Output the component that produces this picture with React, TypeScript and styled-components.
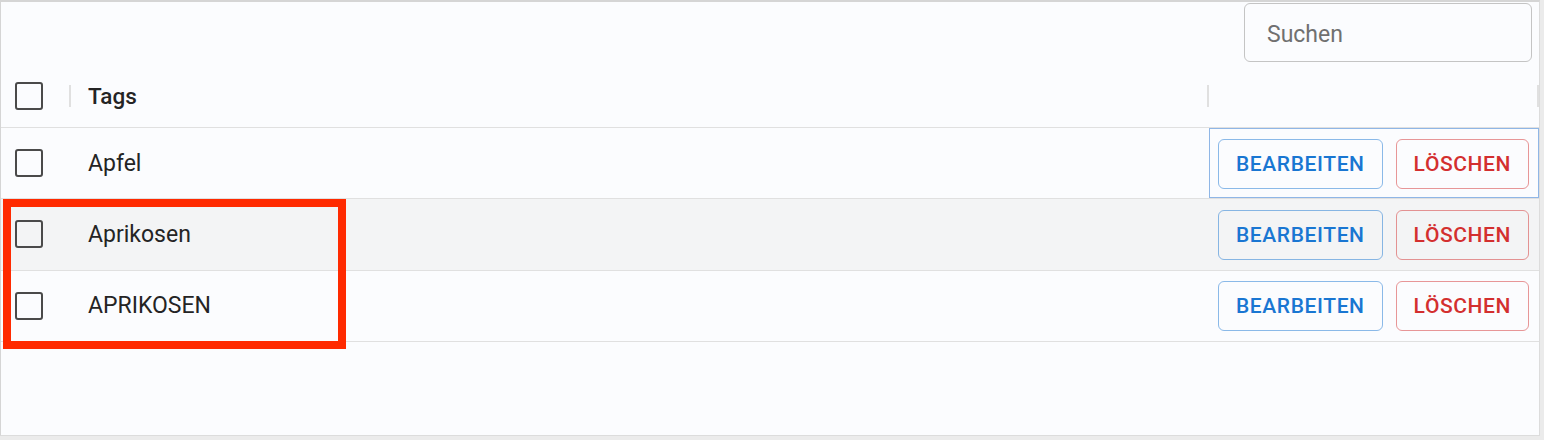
import React from 'react'
import styled, { createGlobalStyle } from 'styled-components'

const GlobalStyle = createGlobalStyle`
  html, body {
    margin: 0;
    padding: 0;
    background: #ebebeb;
  }
  body {
    font-family: Roboto, "Liberation Sans", Arial, sans-serif;
  }
`

const Frame = styled.div`
  position: relative;
  box-sizing: border-box;
  width: 1540px;
  height: 436px;
  background: #fbfcfe;
  border-top: 2px solid #d5d5d5;
  border-left: 1px solid #d5d5d5;
  border-right: 1px solid #dcdcdc;
  border-bottom: 1px solid #dcdcdc;
  display: flex;
  flex-direction: column;
`

const Toolbar = styled.div`
  height: 63px;
  box-sizing: border-box;
  display: flex;
  justify-content: flex-end;
  align-items: flex-start;
  padding: 1px 7px 0 0;
`

const Search = styled.input`
  box-sizing: border-box;
  width: 288px;
  height: 59px;
  border: 1px solid #c4c4c4;
  border-radius: 6px;
  background: transparent;
  padding: 3px 22px 0;
  font-family: Roboto, "Liberation Sans", Arial, sans-serif;
  font-size: 23px;
  color: #222;
  outline: none;

  &::placeholder {
    color: #707070;
  }
`

const Row = styled.div<{ $header?: boolean; $hover?: boolean }>`
  display: grid;
  grid-template-columns: 70px 1fr 330px;
  height: ${p => (p.$header ? '62px' : '70.33px')};
  border-bottom: 1px solid #e0e0e0;
  background: ${p => (p.$hover ? '#f3f4f5' : 'transparent')};
`

const Cell = styled.div<{ $focused?: boolean }>`
  position: relative;
  display: flex;
  align-items: center;
  min-width: 0;
  outline: ${p => (p.$focused ? '1px solid #8fb6e6' : 'none')};
  outline-offset: -1px;
`

const CheckCell = styled(Cell)`
  padding-left: 14px;
`

const TextCell = styled(Cell)`
  padding-left: 17px;
  font-size: 23px;
  color: #242424;
`

const HeaderTitle = styled(TextCell)`
  font-weight: 500;
  font-size: 22.5px;
`

const ActionCell = styled(Cell)`
  gap: 13px;
  padding-left: 9px;
`

const Separator = styled.span`
  position: absolute;
  right: 0;
  top: 50%;
  width: 2px;
  height: 22px;
  margin-top: -11px;
  background: #e0e0e0;
`

const Box = styled.span`
  box-sizing: border-box;
  width: 28px;
  height: 28px;
  border: 2.6px solid #4a4a4a;
  border-radius: 3px;
`

const ActionButton = styled.button<{ $tone: 'primary' | 'error' }>`
  box-sizing: border-box;
  height: 50px;
  padding: 0 17px;
  margin-top: 1px;
  background: transparent;
  border-radius: 6px;
  border: 1px solid
    ${p => (p.$tone === 'primary' ? 'rgba(25, 118, 210, 0.5)' : 'rgba(211, 47, 47, 0.5)')};
  color: ${p => (p.$tone === 'primary' ? '#1976d2' : '#d32f2f')};
  font-family: Roboto, "Liberation Sans", Arial, sans-serif;
  font-size: 21px;
  font-weight: 500;
  letter-spacing: 0.6px;
  text-transform: uppercase;
  cursor: pointer;
  white-space: nowrap;
`

const Highlight = styled.div`
  position: absolute;
  left: 2px;
  top: 197px;
  width: 343px;
  height: 150px;
  box-sizing: border-box;
  border: 8px solid #ff2a00;
  pointer-events: none;
`

const tags = ['Apfel', 'Aprikosen', 'APRIKOSEN']

export default function App() {
  return (
    <>
      <GlobalStyle />
      <Frame>
        <Toolbar>
          <Search placeholder="Suchen" />
        </Toolbar>
        <Row $header>
          <CheckCell>
            <Box />
            <Separator />
          </CheckCell>
          <HeaderTitle>
            Tags
            <Separator />
          </HeaderTitle>
          <Cell>
            <Separator />
          </Cell>
        </Row>
        {tags.map((tag, i) => (
          <Row key={tag} $hover={i === 1}>
            <CheckCell>
              <Box />
            </CheckCell>
            <TextCell>{tag}</TextCell>
            <ActionCell $focused={i === 0}>
              <ActionButton $tone="primary">Bearbeiten</ActionButton>
              <ActionButton $tone="error">Löschen</ActionButton>
            </ActionCell>
          </Row>
        ))}
        <Highlight />
      </Frame>
    </>
  )
}
